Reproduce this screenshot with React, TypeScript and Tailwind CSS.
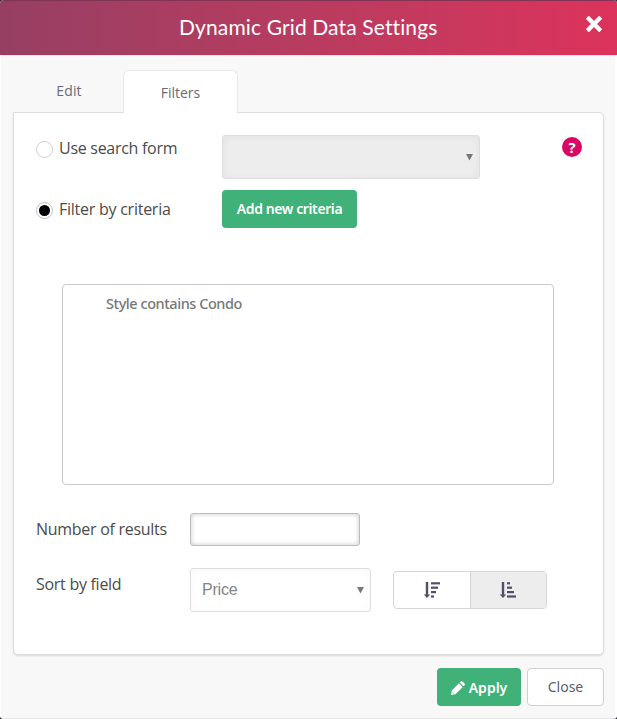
import type { ReactNode } from 'react'
import clsx from 'clsx'

const CloseIcon = () => (
  <svg width="16" height="16" viewBox="0 0 16 16" aria-hidden="true">
    <path
      d="M2.8 2.8 13.2 13.2M13.2 2.8 2.8 13.2"
      stroke="white"
      strokeWidth="4.4"
      strokeLinecap="square"
      strokeLinejoin="round"
    />
  </svg>
)

const PencilIcon = () => (
  <svg width="14" height="14" viewBox="0 0 14 14" fill="white" aria-hidden="true">
    <path d="M7.9 2.2 11.8 6.1 4.4 13.2 0 14 .8 9.6ZM8.7 1.5 9.8.5Q10.6-.2 11.4.5L13.5 2.6Q14.2 3.4 13.5 4.2L12.5 5.3Z" />
    <path d="M1.6 10.9 3.1 12.4 2.2 12.6 1.4 11.8Z" fill="#3fb179" />
  </svg>
)

const SortIcon = ({ bars }: { bars: number[] }) => (
  <svg width="16" height="16" viewBox="0 0 16 16" fill="#50506b" aria-hidden="true">
    <path d="M1.8 0H4.2V12.5H6.2L3 16-.2 12.5H1.8Z" />
    {bars.map((width, i) => (
      <rect key={i} x="7" y={i * 4.4 + 0.2} width={width} height="2.2" />
    ))}
  </svg>
)

const Arrow = () => (
  <svg width="7" height="7" viewBox="0 0 7 7" aria-hidden="true">
    <path d="M0 0H7L3.5 6.5Z" fill="#777" />
  </svg>
)

const Select = ({ className, children }: { className: string; children?: ReactNode }) => (
  <div
    className={clsx(
      'flex h-11 shrink-0 items-center justify-between rounded-[3px] border border-[#dedede] pr-1.5 pl-[11px] font-["Liberation_Sans",sans-serif] text-base tracking-[-0.2px] text-[#858585]',
      className,
    )}
  >
    <span>{children}</span>
    <Arrow />
  </div>
)

const Radio = ({ checked = false }: { checked?: boolean }) => (
  <span
    role="radio"
    aria-checked={checked}
    className={clsx(
      'flex size-[17px] shrink-0 items-center justify-center rounded-full border bg-white',
      checked ? 'border-[#b9c2ca]' : 'border-[#cfcfcf]',
    )}
  >
    {checked && <span className="size-[11px] rounded-full bg-black" />}
  </span>
)

export default function App() {
  return (
    <div className="h-[719px] w-[617px] bg-[#30303c] font-['Open_Sans',sans-serif] text-base tracking-[-0.28px] text-[#4b4b4b]">
      <div className="flex h-[719px] flex-col overflow-hidden rounded-[4px] bg-[#f8f8f8]">
        <header className="flex h-[55px] shrink-0 items-center border-t border-[#813453] bg-linear-to-r from-[#963f63] to-[#dc325b] pr-[15px] pb-[3px] pl-[179px]">
          <h1 className="font-['Lato',sans-serif] text-[21px] leading-7 tracking-[0.13px] whitespace-nowrap text-white">
            Dynamic Grid Data Settings
          </h1>
          <button className="mb-1.5 ml-auto">
            <CloseIcon />
          </button>
        </header>

        <div className="flex grow flex-col border-t border-r-2 border-b border-l border-t-[#f5dce4] border-r-white border-b-[#e4e4e4] border-l-white pr-[11px] pl-3">
          <nav className="mt-3.5 flex h-[42px] shrink-0 text-sm tracking-normal text-[#6a6a78]">
            <button className="w-[110px] pl-0.5 tracking-[0.1px]">Edit</button>
            <button className="z-10 -mb-px h-[44px] w-[115px] rounded-t-[6px] border border-b-0 border-[#e9e9e9] bg-white">
              Filters
            </button>
          </nav>

          <main className="h-[543px] shrink-0 rounded-[5px] rounded-tl-none border border-[#dddddd] bg-white shadow-[0_1px_2px_rgba(0,0,0,0.12)]">
            <section className="mt-[22px] flex h-11 pr-[21px] pl-[22px]">
              <label className="flex w-[186px] items-start gap-1.5 pt-[6px]">
                <Radio />
                <span className="-mt-[5px] leading-6">Use search form</span>
              </label>
              <Select className="w-[258px] bg-[#ededed] shadow-[inset_0_1px_8px_rgba(0,0,0,0.05)]" />
              <span className="mt-[2px] ml-auto flex size-5 items-center justify-center rounded-full bg-[#dc0663] text-[15px] leading-5 font-bold text-white">
                ?
              </span>
            </section>

            <section className="mt-[11px] flex h-[38px] pl-[22px]">
              <label className="flex w-[186px] items-start gap-1.5 pt-3">
                <Radio checked />
                <span className="-mt-[5px] leading-6 tracking-[-0.25px]">Filter by criteria</span>
              </label>
              <button className="h-[38px] w-[135px] rounded-[4px] bg-[#3fb179] font-['Noto_Sans',sans-serif] text-sm font-semibold tracking-[-0.4px] text-white">
                Add new criteria
              </button>
            </section>

            <div className="mt-14 ml-12 h-[201px] w-[492px] rounded-[4px] border border-[#c9c9c9] pt-[7px] pl-[43px] font-['Noto_Sans',sans-serif] text-[14.5px] leading-[22px] font-medium tracking-[-0.45px] text-[#777]">
              Style contains Condo
            </div>

            <section className="mt-[28px] flex h-[33px] items-center pl-[22px]">
              <label className="w-[154px] pb-0.5">Number of results</label>
              <input
                aria-label="Number of results"
                className="h-[33px] w-[170px] rounded-[3px] border border-[#bdbdbd] bg-white shadow-[inset_0_0_5px_rgba(0,0,0,0.22)]"
              />
            </section>

            <section className="mt-[22px] flex h-11 pl-[22px]">
              <label className="w-[154px] pt-1 leading-6">Sort by field</label>
              <Select className="w-[181px] bg-white shadow-[inset_0_1px_8px_rgba(0,0,0,0.03)]">Price</Select>
              <div className="mt-[3px] ml-[22px] flex h-[38px] w-[154px] overflow-hidden rounded-[4px] border border-[#d5d5d5]">
                <button className="flex w-[77px] items-center justify-center border-r border-[#d5d5d5]">
                  <SortIcon bars={[9, 7, 5, 3]} />
                </button>
                <button className="flex grow items-center justify-center bg-[#ededed] pr-0.5">
                  <SortIcon bars={[3, 5, 7, 9]} />
                </button>
              </div>
            </section>
          </main>

          <footer className="mt-[13px] flex justify-end gap-1.5 font-['Noto_Sans',sans-serif] text-sm tracking-normal">
            <button className="flex h-[38px] w-[84px] items-center justify-center gap-1 rounded-[4px] bg-[#3fb179] pt-px font-semibold text-white">
              <PencilIcon />
              Apply
            </button>
            <button className="h-[38px] w-[77px] rounded-[4px] border border-[#d0d0d0] bg-white text-[#5e5e72]">
              Close
            </button>
          </footer>
        </div>
      </div>
    </div>
  )
}
